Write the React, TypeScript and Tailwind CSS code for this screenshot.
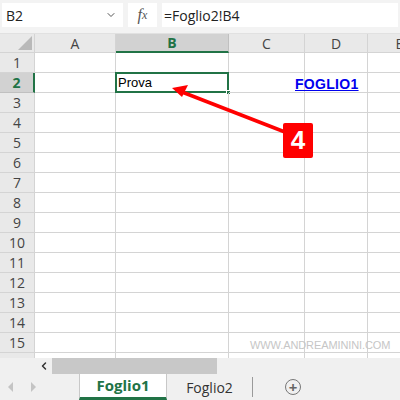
import { ChevronDown, ChevronLeft } from 'lucide-react';

const COLS = [
  { key: 'A', w: 'w-[81px]' },
  { key: 'B', w: 'w-[113px]' },
  { key: 'C', w: 'w-[76px]' },
  { key: 'D', w: 'w-[63px]' },
  { key: 'E', w: 'w-[64px]' },
];

const ROWS = Array.from({ length: 16 }, (_, i) => i + 1);

const ui = { fontFamily: '"Open Sans", "Noto Sans", sans-serif' };
const arial = { fontFamily: '"Liberation Sans", Arial, sans-serif' };

export default function App() {
  return (
    <div className="relative w-[400px] h-[400px] overflow-hidden bg-white" style={ui}>
      {/* barra della formula */}
      <div className="h-[34px] bg-[#f3f3f3] flex items-start pt-[3px] px-[2px] gap-[5px] border-b border-[#e1e1e1]">
        <div className="w-[121px] h-[24px] bg-white flex items-center justify-between pl-[4px] pr-[6px] text-[14px] text-[#222]">
          <span>B2</span>
          <ChevronDown className="w-3 h-3 text-[#555]" strokeWidth={2} />
        </div>
        <div className="w-[29px] h-[24px] bg-white flex items-center justify-center text-[16px] italic text-[#555]" style={{ fontFamily: '"Liberation Serif", serif' }}>
          f<span className="text-[12px]">x</span>
        </div>
        <div className="flex-1 h-[24px] bg-white flex items-center pl-[2px] text-[14px] text-[#222]">
          =Foglio2!B4
        </div>
      </div>

      {/* griglia */}
      <div className="h-[324px] overflow-hidden">
        <div className="flex h-[19px] bg-[#e9e9e9] text-[14px] text-[#444]">
          <div className="w-[35px] shrink-0 border-r border-b border-[#d4d4d4] flex items-end justify-end p-[2px]">
            <div className="w-0 h-0 border-l-[14px] border-l-transparent border-b-[14px] border-b-[#b9b9b9]" />
          </div>
          {COLS.map((c) =>
            c.key === 'B' ? (
              <div key={c.key} className={`${c.w} shrink-0 bg-[#d2d2d2] border-r border-[#c0c0c0] border-b-2 border-b-[#217346] flex items-center justify-center font-bold text-[#217346]`}>
                {c.key}
              </div>
            ) : (
              <div key={c.key} className={`${c.w} shrink-0 border-r border-b border-[#d4d4d4] flex items-center justify-center`}>
                {c.key}
              </div>
            )
          )}
        </div>
        {ROWS.map((r) => (
          <div key={r} className="flex h-[20px]">
            {r === 2 ? (
              <div className="w-[35px] shrink-0 bg-[#d2d2d2] border-b border-[#c0c0c0] border-r-2 border-r-[#217346] flex items-center justify-center text-[14px] font-bold text-[#217346]">
                {r}
              </div>
            ) : (
              <div className="w-[35px] shrink-0 bg-[#e9e9e9] border-b border-r border-[#d4d4d4] flex items-center justify-center text-[14px] text-[#444]">
                {r}
              </div>
            )}
            {COLS.map((c) => (
              <div key={c.key} className={`${c.w} shrink-0 relative border-r border-b border-[#d4d4d4] flex items-center text-[13px]`} style={arial}>
                {r === 2 && c.key === 'B' && (
                  <>
                    <span className="pl-[2px] text-black">Prova</span>
                    <div className="absolute -left-[1px] -top-[1px] -right-[1px] -bottom-[1px] border-2 border-[#217346]" />
                    <div className="absolute -right-[3px] -bottom-[3px] w-[5px] h-[5px] bg-[#217346] border border-white" />
                  </>
                )}
                {r === 2 && c.key === 'C' && (
                  <span className="absolute left-[66px] top-[1px] text-[14px] font-bold text-[#0000ee] underline whitespace-nowrap tracking-[0.3px]">
                    FOGLIO1
                  </span>
                )}
              </div>
            ))}
          </div>
        ))}
      </div>

      {/* barra di scorrimento */}
      <div className="flex h-[16px] bg-[#f0f0f0]">
        <div className="w-[35px]" />
        <div className="w-[17px] flex items-center justify-center text-[#333]">
          <ChevronLeft className="w-3 h-3" strokeWidth={3} />
        </div>
        <div className="w-[165px] bg-[#c8c8c8]" />
        <div className="flex-1" />
      </div>

      {/* schede dei fogli */}
      <div className="flex h-[26px] bg-[#f0f0f0] items-stretch">
        <div className="w-[79px] flex items-center gap-[18px] pl-[8px]">
          <div className="w-0 h-0 border-y-[5px] border-y-transparent border-r-[5px] border-r-[#c4c4c4]" />
          <div className="w-0 h-0 border-y-[5px] border-y-transparent border-l-[5px] border-l-[#c4c4c4]" />
        </div>
        <div className="w-[88px] bg-white border-l border-r border-[#c8c8c8] border-b-[3px] border-b-[#217346] flex items-center justify-center text-[15px] font-bold text-[#217346]">
          Foglio1
        </div>
        <div className="w-[86px] flex items-center justify-center text-[14px] text-[#333] border-r border-[#9a9a9a] my-[3px]">
          Foglio2
        </div>
        <div className="w-[80px] flex items-center justify-center">
          <div className="w-[16px] h-[16px] rounded-full border-[1.5px] border-[#777] flex items-center justify-center text-[#666] text-[15px] leading-none font-bold">
            +
          </div>
        </div>
      </div>

      {/* freccia e numero */}
      <svg className="absolute left-0 top-0 pointer-events-none" width="400" height="400">
        <line x1="290" y1="134" x2="182" y2="92" stroke="#ff0000" strokeWidth="3.5" />
        <polygon points="172,88 188,85 182,97" fill="#ff0000" />
      </svg>
      <div className="absolute left-[283px] top-[123px] w-[30px] h-[35px] bg-[#ff0000] rounded-[2px] flex items-center justify-center text-white text-[26px] font-bold" style={arial}>
        4
      </div>

      <div className="absolute left-[250px] top-[337px] text-[11px] text-[#c6c6c6] tracking-[-0.1px]" style={arial}>
        WWW.ANDREAMININI.COM
      </div>
    </div>
  );
}
